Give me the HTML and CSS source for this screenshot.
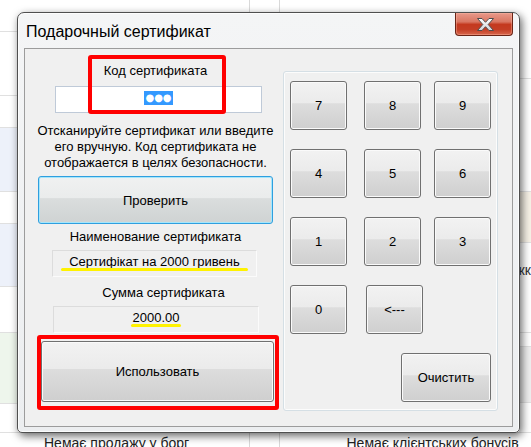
FILE: index.html
```html
<!DOCTYPE html>
<html lang="ru">

<head>
    <meta charset="UTF-8">
    <title>Подарочный сертификат</title>
    <link rel="stylesheet" href="styles.css">
</head>

<body>
    <!-- the app behind the dialog -->
    <div class="backdrop">
        <div class="bg-col bg-left">
            <div class="bg-row r32"></div>
            <div class="bg-row r64"></div>
            <div class="bg-row r32"></div>
            <div class="bg-row r64 blue"></div>
            <div class="bg-row r32"></div>
            <div class="bg-row r63 blue"></div>
            <div class="bg-row r46"></div>
            <div class="bg-row r71 green"></div>
            <div class="bg-row r29"></div>
            <div class="bg-text left-text">Немає продажу у борг</div>
        </div>
        <div class="bg-col bg-mid"></div>
        <div class="bg-col bg-right">
            <div class="bg-row r79"></div>
            <div class="bg-row r113"></div>
            <div class="bg-row r51 beige"></div>
            <div class="bg-row r90"><span class="cut-text">жк</span></div>
            <div class="bg-row r14"></div>
            <div class="bg-row r56 grey"></div>
            <div class="bg-row r30"></div>
            <div class="bg-text right-text">Немає клієнтських бонусів</div>
        </div>
    </div>

    <div class="window">
        <div class="titlebar">
            <span class="title">Подарочный сертификат</span>
            <button class="close" aria-label="Закрыть">
                <svg width="17" height="13" viewBox="0 0 17 13">
                    <defs>
                        <linearGradient id="xg" x1="0" y1="0" x2="0" y2="1">
                            <stop offset="0" stop-color="#ffffff" />
                            <stop offset="1" stop-color="#cfd3da" />
                        </linearGradient>
                    </defs>
                    <polygon points="0.5,0.5 5,0.5 8.5,4.3 12,0.5 16.5,0.5 11.2,6.5 16.5,12.5 12,12.5 8.5,8.7 5,12.5 0.5,12.5 5.8,6.5"
                        fill="url(#xg)" stroke="#4d4d4d" stroke-width="1" stroke-linejoin="round" />
                </svg>
            </button>
        </div>

        <div class="client">
            <div class="left">
                <div class="caption">Код сертификата</div>
                <div class="code-input"><span class="sel">●●●</span></div>
                <p class="hint">Отсканируйте сертификат или введите его вручную. Код сертификата не отображается в целях безопасности.</p>
                <button class="btn btn-check">Проверить</button>
                <div class="caption cap-name">Наименование сертификата</div>
                <div class="info-box name-box"><span class="mark mark-name">Сертифікат на 2000 гривень</span></div>
                <div class="caption cap-sum">Сумма сертификата</div>
                <div class="info-box sum-box"><span class="mark mark-sum">2000.00</span></div>
                <button class="btn btn-use">Использовать</button>
            </div>

            <div class="keypad">
                <button class="btn key">7</button>
                <button class="btn key">8</button>
                <button class="btn key">9</button>
                <button class="btn key">4</button>
                <button class="btn key">5</button>
                <button class="btn key">6</button>
                <button class="btn key">1</button>
                <button class="btn key">2</button>
                <button class="btn key">3</button>
                <button class="btn key">0</button>
                <button class="btn key key-back">&lt;---</button>
                <div></div>
                <button class="btn key-clear">Очистить</button>
            </div>
        </div>
    </div>

    <!-- red marks drawn over the screenshot -->
    <div class="red-frame frame-code"></div>
    <div class="red-frame frame-use"></div>
</body>

</html>
```

FILE: styles.css
```css
* {
    margin: 0;
    padding: 0;
    box-sizing: border-box;
}

body {
    width: 531px;
    height: 447px;
    overflow: hidden;
    position: relative;
    background: #fff;
    font-family: "Liberation Sans", Arial, sans-serif;
    font-size: 13px;
    color: #000;
}

/* background app */
.backdrop {
    display: flex;
    height: 447px;
}

.bg-col {
    display: flex;
    flex-direction: column;
}

.bg-left {
    width: 255px;
    border-right: 1px solid #d9d9d9;
}

.bg-mid {
    width: 30px;
    border-right: 1px solid #d9d9d9;
}

.bg-right {
    flex: 1;
}

.bg-row {
    border-bottom: 1px solid #e0e0e0;
    flex-shrink: 0;
}

.r14 { height: 14px; }
.r29 { height: 29px; }
.r30 { height: 30px; }
.r32 { height: 32px; }
.r46 { height: 46px; }
.r51 { height: 51px; }
.r56 { height: 56px; }
.r63 { height: 63px; }
.r64 { height: 64px; }
.r71 { height: 71px; }
.r79 { height: 79px; }
.r90 { height: 90px; }
.r113 { height: 113px; }

.blue { background: #edf1fa; }
.green { background: #eef6ec; }
.beige { background: #f6f1e6; }
.grey { background: #eeeeee; }

.bg-text {
    font-size: 14px;
    line-height: 20px;
    color: #222;
    white-space: nowrap;
}

.left-text {
    padding-left: 44px;
}

.right-text {
    padding-left: 67px;
}

.cut-text {
    display: block;
    padding: 19px 0 0 236px;
    font-size: 14px;
    line-height: 16px;
    color: #333;
}

/* dialog window */
.window {
    position: absolute;
    left: 17px;
    top: 12px;
    width: 503px;
    height: 421px;
    display: flex;
    flex-direction: column;
    padding: 0 6px 5px 6px;
    border: 1px solid #4f4f4f;
    border-radius: 7px 7px 5px 5px;
    background: linear-gradient(#f4f5f6, #eceef0);
    box-shadow: inset 0 0 0 1px rgba(255, 255, 255, 0.8), 2px 3px 9px rgba(0, 0, 0, 0.6);
}

.titlebar {
    height: 35px;
    display: flex;
    align-items: flex-start;
    flex-shrink: 0;
}

.title {
    padding: 9px 0 0 2px;
    font-size: 16px;
    line-height: 20px;
    color: #000;
}

.close {
    margin-left: auto;
    width: 58px;
    height: 23px;
    border: 1px solid #6a2416;
    border-top: none;
    border-radius: 0 0 4px 4px;
    background: linear-gradient(#e8998a 0%, #d97763 40%, #c4391f 52%, #c43e25 75%, #d8674d 100%);
    box-shadow: inset 0 0 0 1px rgba(255, 190, 170, 0.4);
    display: flex;
    align-items: center;
    justify-content: center;
    padding-left: 2px;
}

.close svg {
    display: block;
}

.client {
    flex: 1;
    border: 1px solid #9c9c9c;
    background: #f0f0f0;
    display: grid;
    grid-template-columns: 243px 215px;
    column-gap: 3px;
    padding-left: 12px;
    align-items: start;
}

.left {
    display: flex;
    flex-direction: column;
    align-items: flex-start;
}

.caption {
    width: 237px;
    text-align: center;
    line-height: 16px;
    margin-top: 5px;
}

.left .caption:first-child {
    margin-top: 14px;
}

.cap-sum {
    margin-top: 8px;
    padding-left: 16px;
}

.code-input {
    margin: 7px 0 0 18px;
    width: 207px;
    height: 27px;
    background: #fff;
    border: 1px solid #bfcad8;
    display: flex;
    align-items: center;
    justify-content: center;
    padding-bottom: 3px;
}

.sel {
    display: inline-block;
    height: 14px;
    line-height: 14px;
    padding: 0 1px;
    background: #3399ff;
    color: #fff;
    font-family: "DejaVu Sans", sans-serif;
    font-size: 10px;
}

.hint {
    margin-top: 10px;
    width: 237px;
    text-align: center;
    line-height: 16px;
}

.btn {
    font-family: "Liberation Sans", Arial, sans-serif;
    font-size: 13px;
    color: #000;
    border: 1px solid #707070;
    border-radius: 3px;
    background: linear-gradient(#f2f2f2 0%, #ebebeb 45%, #dddddd 46%, #cfcfcf 100%);
    box-shadow: inset 0 0 0 1px #fafafa;
}

.btn-check {
    margin: 5px 0 0 1px;
    width: 235px;
    height: 48px;
    border-color: #2f9fdf;
    background: linear-gradient(#f0f1f1 0%, #eaecec 45%, #dadddd 47%, #cfd3d3 100%);
    box-shadow: inset 0 0 0 1px #a6e6fb;
}

.info-box {
    margin-top: 5px;
    height: 27px;
    border: 1px solid #dcdcdc;
    border-right-color: #fbfbfb;
    border-bottom-color: #fbfbfb;
    text-align: center;
    line-height: 21px;
}

.name-box {
    margin-left: 15px;
    width: 205px;
}

.sum-box {
    margin-left: 16px;
    width: 206px;
}

/* yellow marker lines */
.mark {
    position: relative;
}

.mark::after {
    content: "";
    position: absolute;
    bottom: -2px;
    height: 3px;
    border-radius: 2px;
    background: #fff200;
}

.mark-name::after {
    left: -8px;
    right: -8px;
}

.mark-sum::after {
    left: -2px;
    right: -1px;
}

.btn-use {
    margin: 8px 0 0 4px;
    width: 233px;
    height: 61px;
}

/* keypad group */
.keypad {
    margin-top: 22px;
    height: 340px;
    border: 1px solid #d5dfe5;
    border-radius: 3px;
    box-shadow: inset 0 0 0 1px #fcfcfc;
    padding: 9px 0 0 6px;
    display: grid;
    grid-template-columns: 74px 70px 57px;
    grid-auto-rows: 49px;
    row-gap: 19px;
    align-content: start;
}

.key {
    width: 57px;
    height: 49px;
}

.key-back {
    margin-left: 2px;
}

.key-clear {
    grid-column: 2 / 4;
    justify-self: end;
    width: 90px;
    height: 49px;
}

/* red annotation frames */
.red-frame {
    position: absolute;
    border: 4px solid #ff0000;
    border-radius: 3px;
}

.frame-code {
    left: 88px;
    top: 55px;
    width: 138px;
    height: 59px;
}

.frame-use {
    left: 37px;
    top: 335px;
    width: 242px;
    height: 75px;
}
```
